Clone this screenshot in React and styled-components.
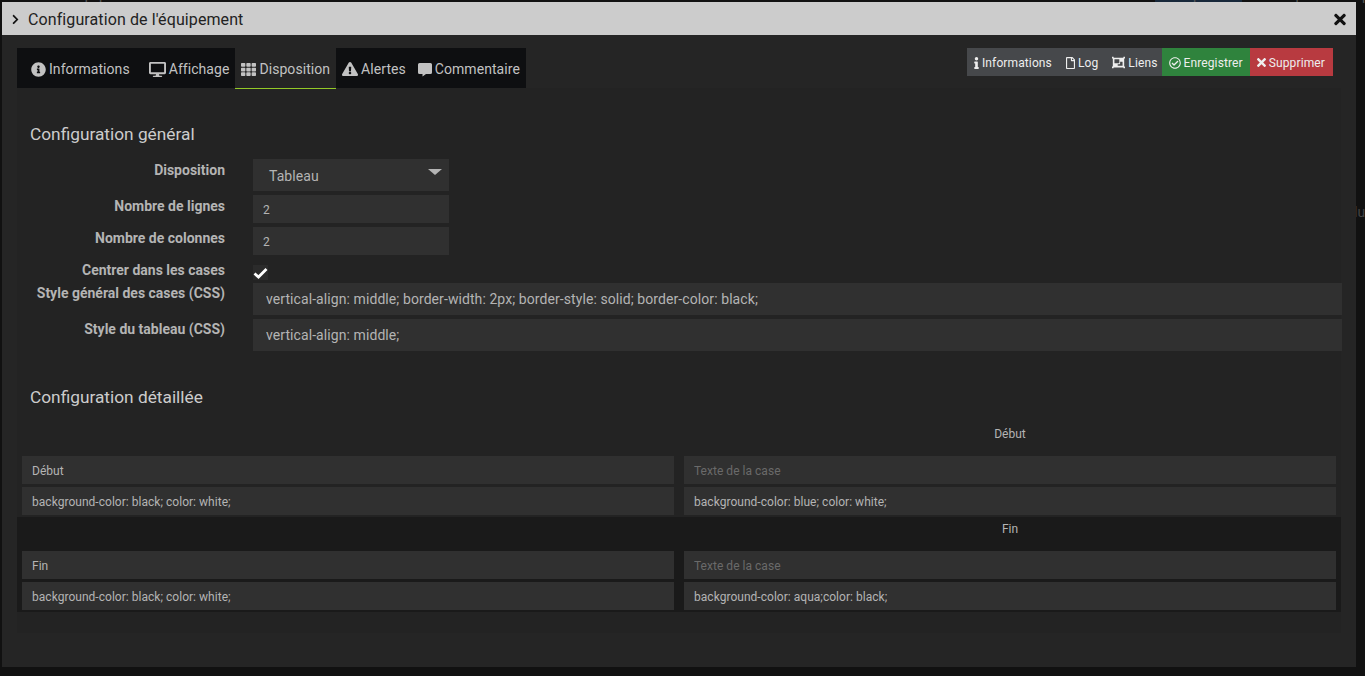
import React from "react";
import styled, { createGlobalStyle } from "styled-components";
import {
  FaChevronRight,
  FaTimes,
  FaInfoCircle,
  FaDesktop,
  FaTh,
  FaExclamationTriangle,
  FaInfo,
  FaRegFile,
  FaObjectGroup,
  FaRegCheckCircle,
} from "react-icons/fa";

const Global = createGlobalStyle`
  html, body { margin: 0; padding: 0; background: #111; }
  body { font-family: Roboto, "Liberation Sans", sans-serif; overflow: hidden; }
  * { box-sizing: border-box; }
`;

function CommentIcon() {
  return (
    <svg width="14" height="15" viewBox="0 0 14 15">
      <path
        d="M1.500 1h11A1.500 1.500 0 0 1 14 2.500v8a1.500 1.500 0 0 1-1.500 1.500H8L4.500 14.500V12h-3A1.500 1.500 0 0 1 0 10.500v-8A1.500 1.500 0 0 1 1.500 1z"
        fill="currentColor"
      />
    </svg>
  );
}

export default function App() {
  return (
    <>
      <Global />
      <Page>
        <BackBlock />
        <BackText $x={63}>L'équipement</BackText>
        <BackText $x={157}>Commandes</BackText>
        <BackText $x={1178}>Expression</BackText>
        <BackText $x={1268}>Template</BackText>
        <BackText $x={1346}>Imp</BackText>
        <SideText>lu</SideText>
        <Dialog>
          <TitleBar>
            <Chevron size={11} />
            <Title>Configuration de l'équipement</Title>
            <CloseIcon size={17} />
          </TitleBar>
          <Body>
            <TopRow>
              <Tabs>
                <Tab $wide><FaInfoCircle size={15} />Informations</Tab>
                <Tab><FaDesktop size={17} />Affichage</Tab>
                <Tab $active><FaTh size={15} />Disposition</Tab>
                <Tab><FaExclamationTriangle size={16} />Alertes</Tab>
                <Tab><CommentIcon />Commentaire</Tab>
              </Tabs>
              <Actions>
                <ActionButton><InfoIcon size={12} />Informations</ActionButton>
                <ActionButton><FileIcon size={12} />Log</ActionButton>
                <ActionButton $right={4}><FaObjectGroup size={13} />Liens</ActionButton>
                <ActionButton $color="#2f833d"><FaRegCheckCircle size={12} />Enregistrer</ActionButton>
                <ActionButton $color="#b83a40" $right={8}><CrossIcon size={13} />Supprimer</ActionButton>
              </Actions>
            </TopRow>
            <Panel>
              <SectionTitle>Configuration général</SectionTitle>
              <FormRow $height={36}>
                <Label>Disposition</Label>
                <SelectBox>
                  Tableau
                  <Caret />
                </SelectBox>
              </FormRow>
              <FormRow $height={32}>
                <Label>Nombre de lignes</Label>
                <ShortInput defaultValue="2" />
              </FormRow>
              <FormRow $height={32}>
                <Label>Nombre de colonnes</Label>
                <ShortInput defaultValue="2" />
              </FormRow>
              <FormRow $height={24}>
                <Label>Centrer dans les cases</Label>
                <CheckBox>
                  <svg width="15" height="12" viewBox="0 0 15 12">
                    <path d="M1.500 6.500 L5.500 10 L13.500 2" fill="none" stroke="#fff" strokeWidth="2.8" />
                  </svg>
                </CheckBox>
              </FormRow>
              <FormRow $height={36}>
                <CssLabel>Style général des cases (CSS)</CssLabel>
                <CssInput defaultValue="vertical-align: middle; border-width: 2px; border-style: solid; border-color: black;" />
              </FormRow>
              <FormRow $height={32}>
                <CssLabel>Style du tableau (CSS)</CssLabel>
                <CssInput defaultValue="vertical-align: middle;" />
              </FormRow>
              <DetailTitle>Configuration détaillée</DetailTitle>
              <CaseTable>
                <CaseRow
                  name="Début"
                  left="background-color: black; color: white;"
                  right="background-color: blue; color: white;"
                />
                <CaseRow
                  $dark
                  name="Fin"
                  left="background-color: black; color: white;"
                  right="background-color: aqua;color: black;"
                />
              </CaseTable>
            </Panel>
          </Body>
        </Dialog>
      </Page>
    </>
  );
}

function CaseRow({ name, left, right, $dark }) {
  return (
    <RowBlock $dark={$dark}>
      <RowName>{name}</RowName>
      <CellGrid>
        <CaseInput defaultValue={name} />
        <CaseInput placeholder="Texte de la case" />
        <CaseInput defaultValue={left} />
        <CaseInput defaultValue={right} />
      </CellGrid>
    </RowBlock>
  );
}

const Page = styled.div`
  position: relative;
  width: 1365px;
  height: 676px;
  padding: 2px 9px 9px 2px;
  background: #111;
  overflow: hidden;
`;

const BackBlock = styled.div`
  position: absolute;
  left: 1155px;
  top: 0;
  width: 87px;
  height: 2px;
  background: #17283a;
`;

const BackText = styled.span`
  position: absolute;
  left: ${(p) => p.$x}px;
  top: -12px;
  font-size: 14px;
  line-height: 14px;
  color: #555;
`;

const SideText = styled.span`
  position: absolute;
  left: 1354px;
  top: 205px;
  font-size: 14px;
  line-height: 14px;
  color: #444;
`;

const Dialog = styled.div`
  position: relative;
  height: 665px;
  background: #252525;
`;

const TitleBar = styled.div`
  height: 33px;
  background: #ccc;
  color: #111;
  display: flex;
  align-items: center;
  padding: 1px 10px 0 10px;
`;

const Chevron = styled(FaChevronRight)`
  width: 7px;
`;

const Title = styled.span`
  font-size: 16px;
  letter-spacing: 0.1px;
  margin-left: 9px;
  color: #222;
`;

const CloseIcon = styled(FaTimes)`
  margin-left: auto;
  width: 12px;
`;

const InfoIcon = styled(FaInfo)`
  width: 5px;
`;

const FileIcon = styled(FaRegFile)`
  width: 9px;
`;

const CrossIcon = styled(FaTimes)`
  width: 9px;
`;

const Body = styled.div`
  padding: 13px 15px 0;
`;

const TopRow = styled.div`
  display: flex;
  justify-content: space-between;
  align-items: flex-start;
  padding-right: 8px;
`;

const Tabs = styled.div`
  display: flex;
  height: 40px;
  background: #0e0f11;
`;

const Tab = styled.div`
  display: flex;
  align-items: center;
  gap: 3px;
  height: ${(p) => (p.$active ? "41px" : "40px")};
  padding: ${(p) => (p.$wide ? "2px 13px 0 14px" : "2px 6px 0")};
  font-size: 14px;
  letter-spacing: 0.06px;
  color: #c2c2c2;
  background: ${(p) => (p.$active ? "#252525" : "transparent")};
  border-bottom: ${(p) => (p.$active ? "1px solid #93c927" : "none")};
`;

const Actions = styled.div`
  display: flex;
  height: 28px;
`;

const ActionButton = styled.div`
  display: flex;
  align-items: center;
  gap: 3px;
  padding: 1px ${(p) => p.$right || 7}px 0 7px;
  font-size: 12px;
  letter-spacing: 0.12px;
  color: #eee;
  background: ${(p) => p.$color || "#46484b"};
`;

const Panel = styled.div`
  height: 545px;
  background: #232323;
  padding-top: 34px;
`;

const SectionTitle = styled.h3`
  margin: 0 0 13px 13px;
  height: 24px;
  font-size: 17.3px;
  line-height: 24px;
  font-weight: 400;
  color: #ccc;
`;

const DetailTitle = styled(SectionTitle)`
  margin: 34px 0 0 13px;
`;

const FormRow = styled.div`
  display: flex;
  height: ${(p) => p.$height}px;
`;

const Label = styled.label`
  width: 208px;
  margin-right: 28px;
  flex: none;
  text-align: right;
  font-size: 14px;
  font-weight: 700;
  line-height: 22px;
  color: #b4b4b4;
`;

const CssLabel = styled(Label)`
  line-height: 20px;
`;

const fieldStyle = `
  border: 0;
  outline: 0;
  background: #303030;
  color: #b4b4b4;
  font-family: Roboto, "Liberation Sans", sans-serif;
`;

const SelectBox = styled.div`
  ${fieldStyle}
  position: relative;
  width: 196px;
  height: 32px;
  padding-left: 16px;
  font-size: 14px;
  letter-spacing: 0.08px;
  line-height: 34px;
`;

const Caret = styled.span`
  position: absolute;
  right: 7px;
  top: 10px;
  border-left: 7px solid transparent;
  border-right: 7px solid transparent;
  border-top: 6px solid #b4b4b4;
`;

const ShortInput = styled.input`
  ${fieldStyle}
  width: 196px;
  height: 28px;
  padding: 2px 10px 0;
  font-size: 12px;
`;

const CheckBox = styled.div`
  width: 15px;
  height: 15px;
  margin-top: 6px;
  background: #2b2b2b;
  display: flex;
  align-items: center;
  justify-content: center;
`;

const CssInput = styled.input`
  ${fieldStyle}
  flex: none;
  width: 1089px;
  height: 32px;
  padding: 0 13px;
  font-size: 14px;
  letter-spacing: 0.08px;
`;

const CaseTable = styled.div`
  margin-top: 13px;
`;

const RowBlock = styled.div`
  height: 95px;
  padding: 0 5px;
  background: ${(p) => (p.$dark ? "#1a1a1a" : "transparent")};
`;

const RowName = styled.div`
  height: 34px;
  padding-top: 5px;
  text-align: center;
  font-size: 12px;
  line-height: 14px;
  color: #b4b4b4;
  margin-left: 662px;
`;

const CellGrid = styled.div`
  display: grid;
  grid-template-columns: 652px 652px;
  column-gap: 10px;
  row-gap: 3px;
`;

const CaseInput = styled.input`
  ${fieldStyle}
  width: 100%;
  height: 28px;
  padding: 2px 10px 0;
  font-size: 12px;
  letter-spacing: 0.03px;
  &::placeholder {
    color: #6a6a6a;
    opacity: 1;
  }
`;
